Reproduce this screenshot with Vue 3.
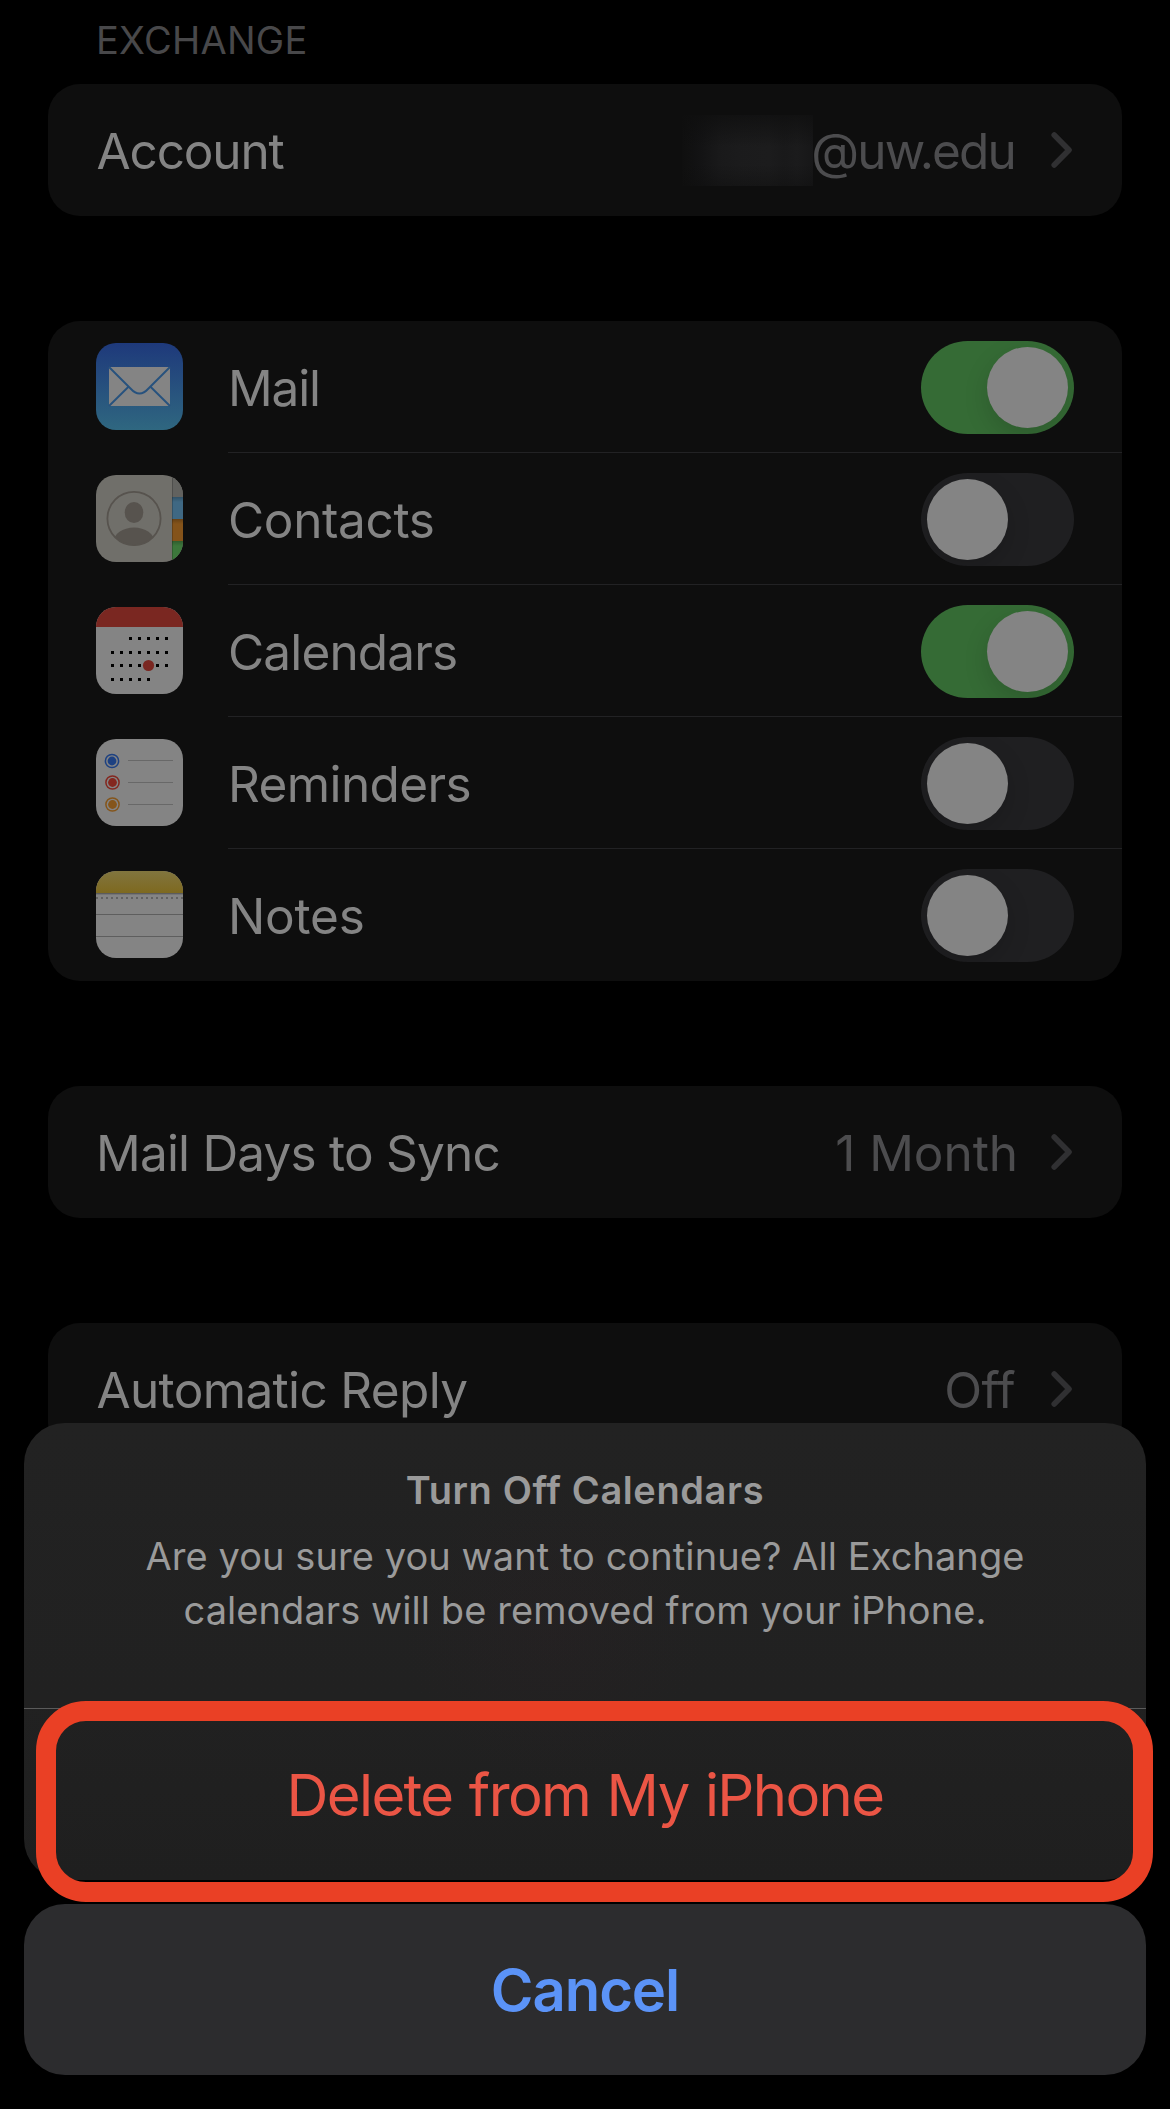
<script setup>
import { ref } from 'vue'

const services = ref([
  { id: 'mail', label: 'Mail', on: true },
  { id: 'contacts', label: 'Contacts', on: false },
  { id: 'calendars', label: 'Calendars', on: true },
  { id: 'reminders', label: 'Reminders', on: false },
  { id: 'notes', label: 'Notes', on: false },
])

// Calendar glyph: first and last column of each week row
const weeks = [
  { y: 31.5, from: 2, to: 6 },
  { y: 45.5, from: 0, to: 6 },
  { y: 58.5, from: 0, to: 6 },
  { y: 72.5, from: 0, to: 4 },
]
const days = weeks.flatMap((w) =>
  Array.from({ length: w.to - w.from + 1 }, (_, i) => ({ x: 16.5 + (w.from + i) * 9, y: w.y }))
)

const bullets = [
  { y: 22, cx: 16, color: '#1d4182' },
  { y: 43.5, cx: 16.5, color: '#84271f' },
  { y: 65.5, cx: 16.5, color: '#85551a' },
]
</script>

<template>
  <div class="screen">
    <main class="settings">
      <h2 class="section-title">EXCHANGE</h2>

      <section class="card">
        <div class="row">
          <span class="label account">Account</span>
          <span class="redacted"></span>
          <span class="value email">@uw.edu</span>
          <svg class="chevron" viewBox="0 0 22 38"><path d="M3.2 4 L18 19 L3.2 34" /></svg>
        </div>
      </section>

      <section class="card">
        <div v-for="s in services" :key="s.id" class="row service">
          <svg v-if="s.id === 'mail'" class="icon" viewBox="0 0 87 87">
            <defs>
              <linearGradient id="mailBg" x1="0" y1="0" x2="0" y2="1">
                <stop offset="0" stop-color="#1e397b" />
                <stop offset="1" stop-color="#2f6780" />
              </linearGradient>
            </defs>
            <rect width="87" height="87" rx="20" fill="url(#mailBg)" />
            <rect x="13" y="24" width="61" height="39" rx="1.6" fill="#848484" />
            <g fill="none" stroke="#27527e" stroke-width="1.9">
              <path d="M13 24 L34.5 45.5 Q43.5 55.5 52.5 45.5 L74 24" />
              <path d="M13 63 L32.5 43.8 M74 63 L54.5 43.8" />
            </g>
          </svg>

          <svg v-else-if="s.id === 'contacts'" class="icon" viewBox="0 0 87 87">
            <defs>
              <clipPath id="contactsShape"><rect width="87" height="87" rx="20" /></clipPath>
              <clipPath id="avatar"><circle cx="38" cy="43.5" r="27" /></clipPath>
              <linearGradient id="tabShade" x1="0" y1="0" x2="0" y2="1">
                <stop offset="0" stop-opacity="0.22" />
                <stop offset="1" stop-opacity="0" />
              </linearGradient>
            </defs>
            <g clip-path="url(#contactsShape)">
              <rect width="87" height="87" fill="#706f6a" />
              <rect x="76" width="11" height="22" fill="#62625f" />
              <rect x="76" y="22" width="11" height="22" fill="#3f6883" />
              <rect x="76" y="44" width="11" height="22" fill="#84531a" />
              <rect x="76" y="66" width="11" height="21" fill="#3c773b" />
              <rect v-for="y in [22, 44, 66]" :key="y" x="76" :y="y" width="11" height="5" fill="url(#tabShade)" />
              <rect x="76" width="1" height="87" fill="#000" opacity="0.2" />
              <ellipse cx="38" cy="37.5" rx="9.3" ry="10.6" fill="#57534e" />
              <ellipse cx="38" cy="67" rx="20.5" ry="14.4" fill="#57534e" clip-path="url(#avatar)" />
              <circle cx="38" cy="43.5" r="26.6" fill="none" stroke="#57534e" stroke-width="1.8" />
            </g>
          </svg>

          <svg v-else-if="s.id === 'calendars'" class="icon" viewBox="0 0 87 87">
            <defs>
              <clipPath id="calShape"><rect width="87" height="87" rx="20" /></clipPath>
            </defs>
            <g clip-path="url(#calShape)">
              <rect width="87" height="87" fill="#848484" />
              <rect width="87" height="20" fill="#7a2721" />
            </g>
            <rect v-for="(d, i) in days" :key="i" :x="d.x - 1.5" :y="d.y - 1.5" width="3" height="3" fill="#000" />
            <circle cx="52.5" cy="58.5" r="5.6" fill="#7a2721" />
          </svg>

          <svg v-else-if="s.id === 'reminders'" class="icon" viewBox="0 0 87 87">
            <rect width="87" height="87" rx="20" fill="#848484" />
            <g v-for="b in bullets" :key="b.y">
              <circle :cx="b.cx" :cy="b.y" r="6.6" fill="none" :stroke="b.color" stroke-width="1.5" />
              <circle :cx="b.cx" :cy="b.y" r="4.4" :fill="b.color" />
            </g>
            <path d="M32 21.5 H77 M32 43.5 H77 M32 65.5 H77" stroke="#686868" stroke-width="1" />
          </svg>

          <svg v-else class="icon" viewBox="0 0 87 87">
            <defs>
              <clipPath id="notesShape"><rect width="87" height="87" rx="20" /></clipPath>
              <linearGradient id="notesTop" x1="0" y1="0" x2="0" y2="1">
                <stop offset="0" stop-color="#81753f" />
                <stop offset="1" stop-color="#7e691f" />
              </linearGradient>
            </defs>
            <g clip-path="url(#notesShape)">
              <rect width="87" height="87" fill="#848484" />
              <rect width="87" height="22" fill="url(#notesTop)" />
              <path d="M0 22.5 H87" stroke="#5c5c5c" stroke-width="1" />
              <path d="M0 23.5 H87" stroke="#757575" stroke-width="1" />
              <path d="M0 27 H87" stroke="#626262" stroke-width="2" stroke-dasharray="2 3" />
              <path d="M0 43.5 H87 M0 65.5 H87" stroke="#5e5e5e" stroke-width="1" />
            </g>
          </svg>

          <div class="service-body">
            <span class="label" :class="s.id">{{ s.label }}</span>
            <span class="toggle" :class="{ on: s.on }"><span class="knob"></span></span>
          </div>
        </div>
      </section>

      <section class="card">
        <div class="row">
          <span class="label sync">Mail Days to Sync</span>
          <span class="value month">1 Month</span>
          <svg class="chevron" viewBox="0 0 22 38"><path d="M3.2 4 L18 19 L3.2 34" /></svg>
        </div>
      </section>

      <section class="card">
        <div class="row">
          <span class="label reply">Automatic Reply</span>
          <span class="value off">Off</span>
          <svg class="chevron" viewBox="0 0 22 38"><path d="M3.2 4 L18 19 L3.2 34" /></svg>
        </div>
      </section>
    </main>

    <div class="sheet">
      <div class="sheet-main">
        <div class="sheet-message">
          <h3>Turn Off Calendars</h3>
          <p>Are you sure you want to continue? All Exchange<br />calendars will be removed from your iPhone.</p>
        </div>
        <div class="action delete">Delete from My iPhone</div>
      </div>
      <div class="action cancel">Cancel</div>
    </div>
    <div class="highlight"></div>
  </div>
</template>

<style>
body {
  margin: 0;
  background: #000;
}
</style>

<style scoped>
.screen {
  position: relative;
  width: 1170px;
  height: 2109px;
  overflow: hidden;
  background: #000;
  font-family: Inter, 'Liberation Sans', sans-serif;
}
.settings {
  display: flex;
  flex-direction: column;
  gap: 105px;
  padding: 16px 48px 0;
}
.section-title {
  margin: 0 0 -105px;
  padding-left: 48px;
  height: 68px;
  box-sizing: border-box;
  font-size: 38px;
  font-weight: 400;
  line-height: 48px;
  letter-spacing: 0.25px;
  color: #48484a;
}
.card {
  border-radius: 32px;
  background: #0e0e0e;
}
.row {
  display: flex;
  align-items: center;
  height: 132px;
  padding: 0 48px;
  font-size: 49.5px;
  line-height: 60px;
}
.label,
.value {
  padding-top: 2px;
  white-space: nowrap;
}
.label {
  margin-right: auto;
  color: #848484;
}
.value {
  color: #4c4c4e;
}
.account { margin-left: 0.5px; letter-spacing: -1.15px; }
.sync { letter-spacing: -0.8px; }
.reply { margin-left: 0.5px; letter-spacing: -0.65px; }
.email { margin-left: -2px; margin-right: 36px; letter-spacing: -1.85px; }
.month { margin-right: 33px; letter-spacing: -0.05px; }
.off { margin-right: 36px; letter-spacing: -0.6px; }
.mail { letter-spacing: -1.15px; }
.contacts { letter-spacing: -0.35px; }
.calendars { letter-spacing: -0.85px; }
.reminders { letter-spacing: -0.6px; }
.notes { letter-spacing: -0.2px; }

.redacted {
  width: 131px;
  height: 71px;
  background:
    linear-gradient(to bottom, rgba(14, 14, 14, 0.75), transparent 45%, transparent 70%, rgba(14, 14, 14, 0.45)),
    linear-gradient(to right, #0f0f0f, #131314 14%, #19191a 28%, #1b1b1c 42%, #1c1c1d 66%, #19191a 78%, #1b1b1c 88%, #171718);
}
.chevron {
  width: 22px;
  height: 38px;
  margin-right: 1px;
  flex: none;
}
.chevron path {
  fill: none;
  stroke: #303032;
  stroke-width: 5.6;
  stroke-linecap: round;
  stroke-linejoin: round;
}

.service {
  padding-right: 0;
}
.icon {
  width: 87px;
  height: 87px;
  margin: 0 45px 1px 0;
  flex: none;
}
.service-body {
  display: flex;
  align-items: center;
  flex: 1;
  height: 132px;
  box-sizing: border-box;
  padding-right: 48px;
}
.service:not(:last-child) .service-body {
  background: linear-gradient(#222224, #222224) bottom / 100% 1px no-repeat;
}
.toggle {
  display: flex;
  width: 153px;
  height: 93px;
  margin-top: 1px;
  padding: 6px;
  box-sizing: border-box;
  border-radius: 47px;
  background: #1f1f21;
  overflow: hidden;
}
.toggle.on {
  justify-content: flex-end;
  background: #356b35;
}
.knob {
  width: 81px;
  height: 81px;
  border-radius: 50%;
  background: #848484;
  box-shadow: 0 9px 24px rgba(0, 0, 0, 0.15);
}

.sheet {
  position: absolute;
  left: 24px;
  top: 1423px;
  width: 1122px;
  display: flex;
  flex-direction: column;
  gap: 24px;
}
.sheet-main {
  border-radius: 41px;
  background:
    radial-gradient(circle at 530px 210px, rgba(60, 30, 40, 0.1), transparent 150px),
    linear-gradient(#222, #212121 60%, #1f1f1f);
}
.sheet-message {
  height: 285px;
  padding-top: 44px;
  box-sizing: border-box;
  text-align: center;
  color: #9a9a9a;
}
.sheet-message h3 {
  margin: 0;
  font-size: 38px;
  font-weight: 600;
  line-height: 46px;
  letter-spacing: 0.6px;
}
.sheet-message p {
  margin: 16px 0 0;
  font-size: 38px;
  line-height: 54px;
  letter-spacing: 0.07px;
}
.action {
  display: flex;
  align-items: center;
  justify-content: center;
  height: 171px;
  font-size: 58px;
}
.delete {
  border-top: 1px solid #5a5a5a;
  box-sizing: border-box;
  height: 172px;
  color: #eb5545;
  letter-spacing: -1.62px;
  word-spacing: 1.6px;
}
.cancel {
  border-radius: 41px;
  background: #2c2c2e;
  color: #5b93f7;
  font-weight: 600;
  letter-spacing: -1.05px;
}
.highlight {
  position: absolute;
  left: 36px;
  top: 1701px;
  width: 1117px;
  height: 201px;
  box-sizing: border-box;
  border: 20px solid #ea4025;
  border-radius: 50px;
}
</style>
